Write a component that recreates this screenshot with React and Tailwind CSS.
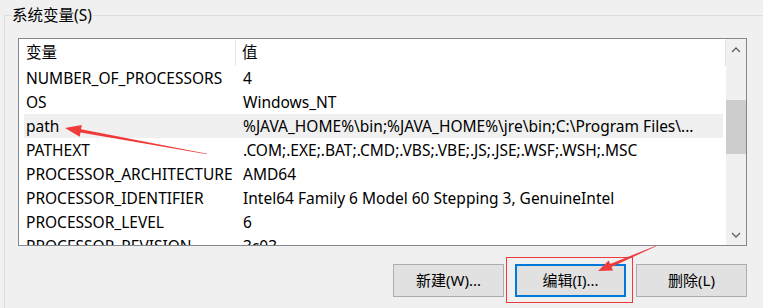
import React from 'react'

const rows = [
  ["NUMBER_OF_PROCESSORS", "4"],
  ["OS", "Windows_NT"],
  ["path", "%JAVA_HOME%\\bin;%JAVA_HOME%\\jre\\bin;C:\\Program Files\\..."],
  ["PATHEXT", ".COM;.EXE;.BAT;.CMD;.VBS;.VBE;.JS;.JSE;.WSF;.WSH;.MSC"],
  ["PROCESSOR_ARCHITECTURE", "AMD64"],
  ["PROCESSOR_IDENTIFIER", "Intel64 Family 6 Model 60 Stepping 3, GenuineIntel"],
  ["PROCESSOR_LEVEL", "6"],
  ["PROCESSOR_REVISION", "3c03"],
]

// red annotation arrow, tapered shaft + filled head
function arrowPoints(tail, tip, head = 16, hw = 6, s0 = 0.3, s1 = 1.6) {
  const dx = tip[0] - tail[0]
  const dy = tip[1] - tail[1]
  const len = Math.hypot(dx, dy)
  const ux = dx / len
  const uy = dy / len
  const nx = -uy
  const ny = ux
  const bx = tip[0] - ux * head
  const by = tip[1] - uy * head
  const p = (x, y) => `${x.toFixed(1)},${y.toFixed(1)}`
  return [
    p(tail[0] + nx * s0, tail[1] + ny * s0),
    p(bx + nx * s1, by + ny * s1),
    p(bx + nx * hw, by + ny * hw),
    p(tip[0], tip[1]),
    p(bx - nx * hw, by - ny * hw),
    p(bx - nx * s1, by - ny * s1),
    p(tail[0] - nx * s0, tail[1] - ny * s0),
  ].join(" ")
}

function Btn({ label, focused }) {
  return (
    <div
      className={
        "w-[111px] h-[33px] flex items-center justify-center bg-[#e1e1e1] text-[15px] text-black " +
        (focused ? "border-2 border-[#0078d7]" : "border border-[#adadad]")
      }
    >
      {label}
    </div>
  )
}

export default function App() {
  return (
    <div
      className="relative w-[763px] h-[308px] overflow-hidden bg-[#f0f0f0] text-black"
      style={{ fontFamily: '"Noto Sans", "Noto Sans CJK SC", sans-serif' }}
    >
      <div className="relative mt-[15px] ml-[4px] border-t border-l border-[#dcdcdc] h-[400px]">
        <span className="absolute -top-[12px] left-[6px] px-[1px] bg-[#f0f0f0] text-[15.5px] leading-[22px]">
          系统变量(S)
        </span>

        <div className="mt-[22px] ml-[13px] w-[729px] h-[208px] border border-[#828790] bg-white flex overflow-hidden">
          <div className="flex-1 flex flex-col">
            <div className="h-[27px] flex items-center text-[15.5px] shrink-0 pt-[1px]">
              <div className="w-[217px] pl-[7px] h-full flex items-center border-r border-[#e5e5e5]">变量</div>
              <div className="flex-1 pl-[6px] h-full flex items-center border-r border-[#e5e5e5]">值</div>
            </div>
            <div className="ml-[5px] w-[699px]">
              {rows.map(([k, v]) => (
                <div
                  key={k}
                  className={
                    "h-[24px] pt-[2px] flex items-center text-[15.5px] whitespace-nowrap " +
                    (k === "path" ? "bg-[#f0f0f0]" : "")
                  }
                >
                  <div className="w-[212px] pl-[2px] shrink-0">{k}</div>
                  <div className="pl-[7px]">{v}</div>
                </div>
              ))}
            </div>
          </div>
          <div className="w-[20px] bg-[#f0f0f0] flex flex-col items-center shrink-0">
            <div className="h-[21px] flex items-center justify-center">
              <svg width="10" height="6" viewBox="0 0 10 6">
                <path d="M1 5 L5 1 L9 5" fill="none" stroke="#606060" strokeWidth="1.3" />
              </svg>
            </div>
            <div className="h-[40px]" />
            <div className="w-[20px] h-[54px] bg-[#cdcdcd]" />
            <div className="flex-1" />
            <div className="h-[21px] flex items-center justify-center">
              <svg width="10" height="6" viewBox="0 0 10 6">
                <path d="M1 1 L5 5 L9 1" fill="none" stroke="#606060" strokeWidth="1.3" />
              </svg>
            </div>
          </div>
        </div>

        <div className="mt-[18px] ml-[13px] w-[729px] flex justify-end">
          <Btn label="新建(W)..." />
          <div className="ml-[11px]">
            <Btn label="编辑(I)..." focused />
          </div>
          <div className="ml-[10px]">
            <Btn label="删除(L)" />
          </div>
        </div>
      </div>

      <div className="absolute left-[506px] top-[257px] w-[127px] h-[46px] border border-[#ee3a3a]" />

      <svg className="absolute left-0 top-0" width="763" height="308">
        <polygon points={arrowPoints([207, 154], [65, 128])} fill="#f03b3b" />
        <polygon points={arrowPoints([656, 246], [598, 271], 14, 5.5)} fill="#f03b3b" />
      </svg>
    </div>
  )
}
